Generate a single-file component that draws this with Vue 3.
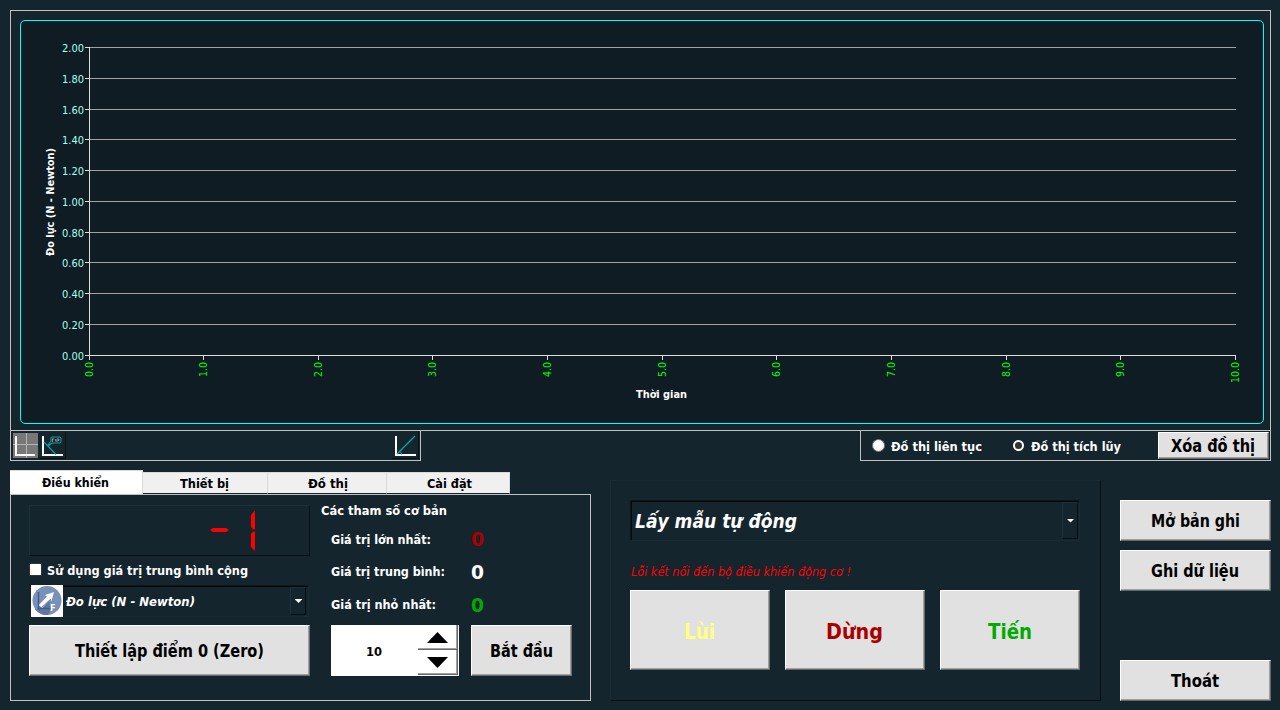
<script setup>
import { h } from 'vue'

// One line of text set to a fixed width; the baseline sits so that capitals look centred.
const Label = (props) =>
  h(
    'svg',
    { class: 'label', width: props.w, height: props.size, 'aria-label': props.text },
    [
      h(
        'text',
        {
          x: 0,
          y: Math.round(props.size * 0.9),
          'font-size': props.size,
          textLength: props.w,
          lengthAdjust: 'spacingAndGlyphs',
          fill: 'currentColor',
        },
        props.text,
      ),
    ],
  )
Label.props = ['text', 'w', 'size']

const rows = [47, 78, 109, 139, 170, 201, 232, 262, 293, 324, 355].map((y, i) => ({
  y: y + 0.5,
  text: (2 - i * 0.2).toFixed(2),
}))
const cols = [89, 203, 318, 432, 547, 662, 776, 891, 1006, 1120, 1235].map((x, i) => ({
  x: x + 0.5,
  text: i.toFixed(1),
  w: i === 10 ? 21 : 15,
}))
const tabs = [
  { text: 'Điều khiển', w: 67, cls: 'active' },
  { text: 'Thiết bị', w: 49, cls: 't2' },
  { text: 'Đồ thị', w: 40, cls: 't3' },
  { text: 'Cài đặt', w: 45, cls: 't4' },
]
const stats = [
  { text: 'Giá trị lớn nhất:', w: 100, cls: 'max' },
  { text: 'Giá trị trung bình:', w: 114, cls: 'avg' },
  { text: 'Giá trị nhỏ nhất:', w: 105, cls: 'min' },
]
const moves = [
  { text: 'Lùi', w: 31, cls: 'back' },
  { text: 'Dừng', w: 57, cls: 'stop' },
  { text: 'Tiến', w: 44, cls: 'forward' },
]
</script>

<template>
  <main class="window">
    <section class="chart-box">
      <svg class="chart" width="1259" height="419" viewBox="11 11 1259 419">
        <rect x="20.5" y="20.5" width="1243" height="403" rx="4.5" fill="#101c23" stroke="#00ffff" />
        <g v-for="r in rows" :key="r.text">
          <path :d="`M90 ${r.y}H1236`" stroke="#a2a2a2" />
          <path :d="`M85 ${r.y}H90`" stroke="#dedede" />
          <text x="62" :y="r.y + 4.5" class="ylab" textLength="22" lengthAdjust="spacingAndGlyphs">{{ r.text }}</text>
        </g>
        <path d="M89.5 47V356M89 355.5H1236" stroke="#dedede" />
        <g v-for="c in cols" :key="c.text">
          <path :d="`M${c.x} 356V360`" stroke="#dedede" />
          <text
            :transform="`translate(${c.x + 3.5} ${362 + c.w}) rotate(-90)`"
            class="xlab"
            :textLength="c.w"
            lengthAdjust="spacingAndGlyphs"
          >{{ c.text }}</text>
        </g>
        <text x="636" y="398" class="title" textLength="51" lengthAdjust="spacingAndGlyphs">Thời gian</text>
        <text transform="translate(54 256) rotate(-90)" class="title" textLength="108" lengthAdjust="spacingAndGlyphs">Đo lực (N - Newton)</text>
      </svg>
    </section>

    <section class="tools">
      <div class="tool-box left">
        <svg width="25" height="25" viewBox="0 0 25 25">
          <rect width="25" height="25" fill="#787878" />
          <path d="M13.5 0V25M0 11.5H25" stroke="#b4b4b4" />
          <path d="M3 3V22H22" fill="none" stroke="#fff" stroke-width="2" />
        </svg>
        <svg class="tool" width="27" height="27" viewBox="0 0 27 27">
          <path d="M0 26.5H26.5V0" fill="none" stroke="#0a1217" />
          <path d="M4 4V23H24" fill="none" stroke="#fff" stroke-width="2" />
          <path d="M5 10L17 22.500M9 14L13 11" fill="none" stroke="#0b989c" stroke-width="1.300" />
          <path d="M8.500 13.500L12 9V6Q12 5 13 5H21L22 6V10L21 11H13Z" fill="#17272c" stroke="#0ba4a7" />
          <path d="M13 7H15M13.500 7V10M16 7L17 9.500M18 7V10M18 7H20V8.500H18.500" fill="none" stroke="#aaa" stroke-width=".8" />
        </svg>
        <svg class="tool last" width="27" height="27" viewBox="0 0 27 27">
          <path d="M0 26.500H26.500V0" fill="none" stroke="#0a1217" />
          <path d="M4 4V23H24" fill="none" stroke="#fff" stroke-width="2" />
          <path d="M5 22L23 4" stroke="#0ba4a7" stroke-width="1.300" />
          <path d="M7 19.500Q10 20 9.500 22.500" fill="none" stroke="#0ba4a7" />
        </svg>
      </div>
      <div class="tool-box right">
        <i class="radio"></i>
        <Label class="r1" text="Đồ thị liên tục" :w="91" :size="13" />
        <i class="radio on"></i>
        <Label class="r2" text="Đồ thị tích lũy" :w="90" :size="13" />
        <button class="btn clear"><Label text="Xóa đồ thị" :w="84" :size="17" /></button>
      </div>
    </section>

    <section class="bottom">
      <div class="tabbed">
        <nav class="tabs">
          <div v-for="t in tabs" :key="t.text" class="tab" :class="t.cls"><Label :text="t.text" :w="t.w" :size="13" /></div>
        </nav>
        <div class="panel">
          <div class="col-a">
            <div class="lcd">
              <svg width="46" height="42" viewBox="0 0 46 42" fill="#f00">
                <path d="M0 19L3 17H16L19 19L16 21H3Z" />
                <path d="M41 4L44.500 0H45V18.500H43.500L41 16ZM41 22.500L43.500 20.500H45V39.500H44.500L41 36Z" />
              </svg>
            </div>
            <div class="check"><i></i><Label text="Sử dụng giá trị trung bình cộng" :w="201" :size="13" /></div>
            <div class="combo unit">
              <svg width="32" height="32" viewBox="0 0 32 32">
                <rect width="32" height="32" fill="#fff" />
                <circle cx="16" cy="15.500" r="14.500" fill="#7891b8" />
                <path d="M7 24L23 8L18 16L20 24L17 30A14.500 14.500 0 0 1 4 24Z" fill="#5f78a3" />
                <path d="M7.500 7V23.500H20" fill="none" stroke="#425c86" stroke-width="1.500" />
                <path d="M14 10L23 7L20.500 16Z" fill="#fff" />
                <path d="M9.500 21.500L19 11.500" stroke="#fff" stroke-width="4.500" />
                <path d="M10.500 22.500L20 14" stroke="#5f78a3" />
                <text x="19" y="26" font-size="9" fill="#fff">F</text>
              </svg>
              <Label class="italic" text="Đo lực (N - Newton)" :w="129" :size="13" />
              <span class="drop"><b></b></span>
            </div>
            <button class="btn zero"><Label text="Thiết lập điểm 0 (Zero)" :w="189" :size="17" /></button>
          </div>
          <div class="col-b">
            <Label class="heading" text="Các tham số cơ bản" :w="126" :size="13" />
            <div class="stats">
              <div v-for="s in stats" :key="s.cls" class="stat">
                <Label :text="s.text" :w="s.w" :size="13" />
                <Label class="value" :class="s.cls" text="0" :w="13" :size="19" />
              </div>
            </div>
            <div class="run">
              <div class="spin">
                <span class="num"><Label text="10" :w="16" :size="13" /></span>
                <span class="arrows">
                  <i><svg width="21" height="11"><path d="M0 11L10.500 0L21 11Z" /></svg></i>
                  <i><svg width="21" height="11"><path d="M0 0L10.500 11L21 0Z" /></svg></i>
                </span>
              </div>
              <button class="btn start"><Label text="Bắt đầu" :w="63" :size="17" /></button>
            </div>
          </div>
        </div>
      </div>

      <div class="motor">
        <div class="combo mode">
          <Label class="italic" text="Lấy mẫu tự động" :w="162" :size="19" />
          <span class="drop"><b></b></span>
        </div>
        <Label class="error" text="Lỗi kết nối đến bộ điều khiển động cơ !" :w="220" :size="13" />
        <div class="moves">
          <button v-for="m in moves" :key="m.cls" class="btn" :class="m.cls"><Label :text="m.text" :w="m.w" :size="22" /></button>
        </div>
      </div>

      <aside class="side">
        <button class="btn"><Label text="Mở bản ghi" :w="89" :size="17" /></button>
        <button class="btn"><Label text="Ghi dữ liệu" :w="88" :size="17" /></button>
        <button class="btn exit"><Label text="Thoát" :w="48" :size="17" /></button>
      </aside>
    </section>
  </main>
</template>

<style>
body { background: #14252e; }
.label { display: block; overflow: visible; flex: none; }
</style>

<style scoped>
* { box-sizing: border-box; }
.window {
  width: 1280px; height: 710px; padding: 10px 9px 9px 10px; overflow: hidden;
  background: #14252e; color: #fff;
  font: bold 13px "DejaVu Sans Condensed", "DejaVu Sans", sans-serif; font-stretch: condensed;
}
svg { display: block; flex: none; }
.chart-box { height: 421px; border: 1px solid #c0c0c0; }
.ylab { font-size: 11px; font-weight: normal; fill: #a5fff0; }
.xlab { font-size: 11px; font-weight: normal; fill: #00ff00; }
.title { font-size: 11px; fill: #fff; }

.tools { display: flex; justify-content: space-between; height: 30px; }
.tool-box { display: flex; width: 411px; height: 30px; border: 1px solid #c0c0c0; border-top: 0; }
.left { padding: 2px 1px 0 2px; }
.tool { margin: -1px 0 0 1px; }
.last { margin-left: auto; }
.right { align-items: center; padding: 0 1px 0 11px; }
.radio { width: 13px; height: 13px; border-radius: 50%; background: #fff; border: 1px solid #6b7479; flex: none; }
.radio.on { background: #333; border: 2px solid #fff; width: 11px; height: 11px; margin-left: 31px; }
.r1 { margin-left: 6px; }
.r2 { margin-left: 7px; }

.btn {
  display: flex; align-items: center; justify-content: center; padding: 0; margin: 0; flex: none;
  font: inherit; font-stretch: inherit; color: #000; background: #e1e1e1; border-radius: 0;
  border: 1px solid; border-color: #fff #696969 #696969 #fff;
  box-shadow: inset -1px -1px #a0a0a0;
}
.clear { width: 111px; height: 27px; margin-left: auto; padding-right: 1px; }

.bottom { display: flex; height: 240px; }
.tabbed { width: 581px; margin-top: 9px; }
.tabs { display: flex; align-items: flex-end; height: 24px; }
.tab { display: flex; align-items: center; justify-content: center; height: 22px; background: #f0f0f0; color: #000; border-top: 1px solid #d9d9d9; border-right: 1px solid #d9d9d9; border-bottom: 1px solid #14252e; padding-bottom: 2px; }
.active { width: 133px; height: 24px; background: #fff; border-bottom: 0; padding: 0 2px 2px 0; }
.t2 { width: 125px; padding-right: 1px; }
.t3 { width: 119px; padding-left: 2px; }
.t4 { width: 123px; padding-left: 2px; }
.panel { display: flex; height: 207px; border: 1px solid #c0c0c0; padding: 10px 0 0 18px; }
.col-a { width: 281px; }
.lcd { width: 281px; height: 51px; padding: 5px 0 0 181px; border: 1px solid; border-color: #1b313c #090f13 #090f13 #1b313c; }
.lcd svg { margin-left: -1px; }
.check { display: flex; align-items: center; height: 29px; gap: 4px; padding-bottom: 3px; }
.check i { width: 13px; height: 13px; background: #fff; border: 1px solid #333; margin-right: 1px; }
.combo { display: flex; align-items: center; border: 1px solid; border-color: #0c151a #182c36 #182c36 #0c151a; box-shadow: inset 1px 1px #03080b; }
.unit { width: 280px; height: 32px; padding-right: 2px; border-left-color: transparent; box-shadow: inset 0 1px #03080b; }
.unit > svg:first-child { margin-left: 1px; }
.italic { font-style: italic; margin: 0 0 2px 3px; }
.drop { width: 16px; height: 28px; margin-left: auto; display: flex; align-items: center; justify-content: center; border: 1px solid; border-color: #1b313c #080e12 #080e12 #1b313c; }
.drop b { width: 8px; height: 4px; background: #fff; clip-path: polygon(0 0, 100% 0, 50% 100%); margin-left: 1px; }
.zero { width: 281px; height: 51px; margin-top: 8px; padding-bottom: 1px; }
.col-b { padding-left: 11px; }
.heading { margin-top: -2px; }
.stats { padding: 6px 0 0 10px; }
.stat { display: flex; align-items: center; width: 153px; height: 33px; justify-content: space-between; }
.stat:nth-child(1) { height: 32px; }
.value { margin-top: 1px; }
.max { color: #aa0000; }
.min { color: #00aa00; }
.run { display: flex; gap: 12px; padding: 0 0 0 10px; height: 51px; margin-top: 5px; }
.spin { display: flex; width: 128px; height: 51px; background: #fff; color: #000; padding-right: 1px; }
.num { display: flex; align-items: center; justify-content: center; width: 87px; padding: 0 1px 1px 0; }
.arrows { width: 40px; }
.arrows i { display: flex; align-items: center; justify-content: center; height: 25px; border-right: 1px solid #696969; border-bottom: 1px solid #696969; box-shadow: inset -1px -1px #a0a0a0; }
.start { width: 101px; height: 51px; }

.motor { width: 491px; height: 221px; margin: 19px 0 0 19px; padding: 19px; border: 1px solid; border-color: #182c36 #080e12 #080e12 #182c36; }
.mode { width: 450px; height: 41px; padding-right: 1px; }
.mode .italic { margin: 0 0 1px 4px; }
.mode .drop { height: 37px; }
.error { font-style: italic; font-weight: normal; color: #ff0000; margin: 23px 0 0 1px; }
.moves { display: flex; gap: 15px; margin-top: 13px; }
.moves .btn { width: 140px; height: 80px; padding-right: 1px; }
.moves .back { color: #ffff7f; }
.moves .stop { color: #aa0000; }
.moves .forward { color: #00aa00; }

.side { display: flex; flex-direction: column; gap: 9px; width: 151px; margin: 39px 0 0 19px; height: 201px; }
.side .btn { height: 41px; padding-right: 1px; }
.side .exit { margin-top: auto; }
</style>
